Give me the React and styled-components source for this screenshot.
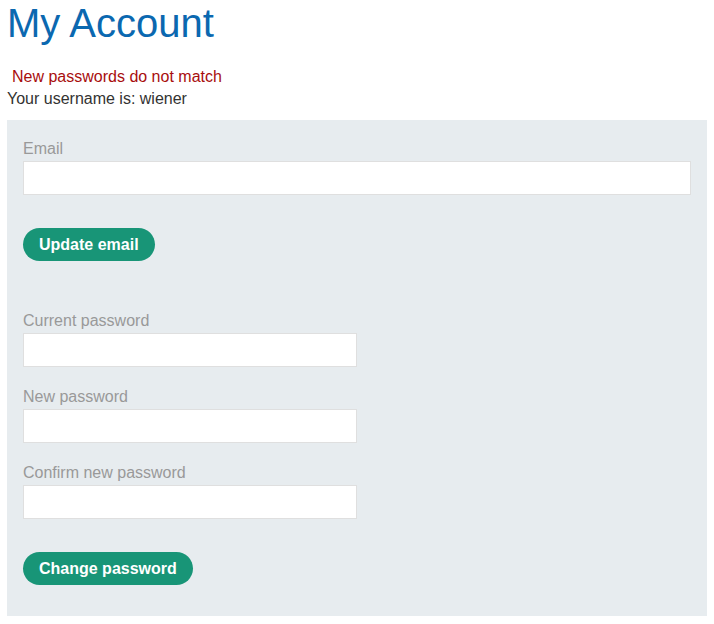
import styled, { createGlobalStyle } from 'styled-components'

const GlobalStyle = createGlobalStyle`
  body {
    margin: 0;
    padding: 0 7px;
    background: #fff;
    font-family: "Liberation Sans", Arial, sans-serif;
    font-size: 16px;
    color: #333332;
  }
`

const Heading = styled.h1`
  margin: 0;
  font-size: 40px;
  font-weight: normal;
  line-height: 46px;
  color: #0b68b0;
`

const ErrorText = styled.p`
  margin: 20px 0 0;
  padding-left: 5px;
  line-height: 22px;
  color: #a80d0d;
`

const Username = styled.p`
  margin: 0;
  line-height: 22px;
`

const Panel = styled.div`
  margin-top: 10px;
  background: #e7ecef;
  padding: 19px 16px 31px;
`

const Form = styled.form`
  display: flex;
  flex-direction: column;
  align-items: flex-start;
  & + & {
    margin-top: 50px;
  }
`

const Label = styled.label`
  display: block;
  line-height: 20px;
  margin: ${({ first }) => (first ? '0' : '20px')} 0 2px;
  color: #999;
`

const Input = styled.input`
  box-sizing: border-box;
  width: ${({ half }) => (half ? '50%' : '100%')};
  height: 34px;
  margin: 0;
  border: 1px solid #dfdfdf;
  background: #fff;
  font: inherit;
  padding: 0 8px;
`

const Button = styled.button`
  margin-top: 33px;
  height: 33px;
  padding: 0 16px;
  border: none;
  border-radius: 17px;
  background: #189577;
  color: #fff;
  font-family: inherit;
  font-size: 16px;
  font-weight: bold;
  cursor: pointer;
`

const App = () => (
  <>
    <GlobalStyle />
    <Heading>My Account</Heading>
    <ErrorText>New passwords do not match</ErrorText>
    <Username>Your username is: wiener</Username>
    <Panel>
      <Form onSubmit={(e) => e.preventDefault()}>
        <Label first>Email</Label>
        <Input type='email' />
        <Button>Update email</Button>
      </Form>
      <Form onSubmit={(e) => e.preventDefault()}>
        <Label first>Current password</Label>
        <Input type='password' half />
        <Label>New password</Label>
        <Input type='password' half />
        <Label>Confirm new password</Label>
        <Input type='password' half />
        <Button>Change password</Button>
      </Form>
    </Panel>
  </>
)

export default App
